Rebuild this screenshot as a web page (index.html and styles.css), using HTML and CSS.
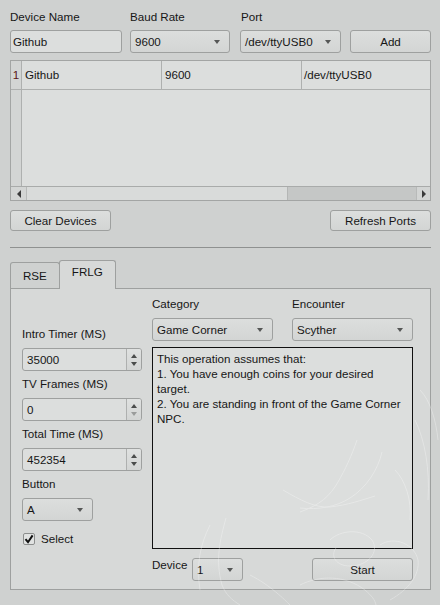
FILE: index.html
```html
<!DOCTYPE html>
<html>
<head>
<meta charset="utf-8">
<link rel="stylesheet" href="styles.css">
</head>
<body>
<div class="window">
  <div class="device-form">
    <div class="field f-name">
      <div class="top-label">Device Name</div>
      <div class="line-edit">Github</div>
    </div>
    <div class="field f-baud">
      <div class="top-label">Baud Rate</div>
      <div class="combo">9600<span class="arrow"></span></div>
    </div>
    <div class="field f-port">
      <div class="top-label">Port</div>
      <div class="combo">/dev/ttyUSB0<span class="arrow"></span></div>
    </div>
    <div class="field f-add">
      <div class="top-label">&nbsp;</div>
      <div class="btn">Add</div>
    </div>
  </div>

  <div class="table">
    <div class="table-body">
      <div class="vheader">
        <div class="vh-cell">1</div>
      </div>
      <div class="cells">
        <div class="row">
          <div class="cell c1">Github</div>
          <div class="cell c2">9600</div>
          <div class="cell c3">/dev/ttyUSB0</div>
        </div>
      </div>
    </div>
    <div class="hscroll">
      <div class="sb-btn sb-left"><span class="tri-left"></span></div>
      <div class="sb-handle"></div>
      <div class="sb-trough"></div>
      <div class="sb-btn sb-right"><span class="tri-right"></span></div>
    </div>
  </div>

  <div class="btn-row">
    <div class="btn wide">Clear Devices</div>
    <div class="btn wide">Refresh Ports</div>
  </div>

  <div class="sep"></div>

  <div class="tabs">
    <div class="tab">RSE</div>
    <div class="tab active">FRLG</div>
  </div>
  <div class="pane">
    <div class="lcol">
      <div class="lbl">Intro Timer (MS)</div>
      <div class="spin">
        <span class="spin-val">35000</span>
        <span class="spin-btns"><span class="tri-up"></span><span class="tri-down"></span></span>
      </div>
      <div class="lbl">TV Frames (MS)</div>
      <div class="spin">
        <span class="spin-val">0</span>
        <span class="spin-btns"><span class="tri-up"></span><span class="tri-down disabled"></span></span>
      </div>
      <div class="lbl">Total Time (MS)</div>
      <div class="spin">
        <span class="spin-val">452354</span>
        <span class="spin-btns"><span class="tri-up"></span><span class="tri-down"></span></span>
      </div>
      <div class="lbl">Button</div>
      <div class="combo small">A<span class="arrow"></span></div>
      <div class="check-row">
        <span class="checkbox"><svg width="10" height="10" viewBox="0 0 10 10"><path d="M1.5 5.2 L4 8.2 L8.6 1.4" fill="none" stroke="#111" stroke-width="2"/></svg></span>
        <span class="check-label">Select</span>
      </div>
    </div>
    <div class="rcol">
      <div class="rtop">
        <div class="rfield">
          <div class="lbl">Category</div>
          <div class="combo">Game Corner<span class="arrow"></span></div>
        </div>
        <div class="rfield">
          <div class="lbl">Encounter</div>
          <div class="combo">Scyther<span class="arrow"></span></div>
        </div>
      </div>
      <div class="info">This operation assumes that:<br>1. You have enough coins for your desired<br>target.<br>2. You are standing in front of the Game Corner<br>NPC.</div>
      <div class="bottom-row">
        <div class="dev-label">Device</div>
        <div class="combo dev">1<span class="arrow"></span></div>
        <div class="btn start">Start</div>
      </div>
    </div>
  </div>

  <svg class="art" width="440" height="605" viewBox="0 0 440 605">
    <g fill="none" stroke="#ffffff" stroke-width="1">
      <path d="M357 440 C352 455 345 470 338 482 C330 496 320 505 300 512"/>
      <path d="M382 452 C378 470 366 488 350 498 C336 507 318 510 300 508"/>
      <path d="M283 490 C300 500 315 508 330 507 C348 505 362 500 375 496"/>
      <path d="M415 420 C425 440 430 470 428 500"/>
      <path d="M420 390 C430 400 436 420 438 440"/>
      <path d="M330 540 C340 530 362 528 372 540 C380 552 368 566 350 566 C336 566 330 556 336 548"/>
      <path d="M380 545 C395 535 415 545 418 560 C420 575 408 590 390 600"/>
      <path d="M210 525 C200 545 196 565 200 590"/>
      <path d="M226 518 C220 540 215 560 222 585 C226 595 232 600 240 605"/>
      <path d="M250 575 C270 585 285 600 290 605"/>
      <path d="M300 585 C320 575 345 575 365 590 C372 596 375 600 376 605"/>
      <path d="M395 470 C405 480 412 500 410 520"/>
    </g>
  </svg>
</div>
</body>
</html>
```

FILE: styles.css
```css
html, body {
  margin: 0;
  padding: 0;
}
body {
  background: #cfd1d0;
  font-family: "Liberation Sans", Arial, sans-serif;
  font-size: 11.6px;
  color: #161616;
}
.window {
  position: relative;
  width: 440px;
  height: 605px;
  box-sizing: border-box;
  padding: 10px 9px 0 10px;
  overflow: hidden;
}

/* top form */
.device-form {
  display: flex;
}
.field {
  display: flex;
  flex-direction: column;
}
.f-name { width: 112px; margin-right: 8px; }
.f-baud { width: 100px; margin-right: 10px; }
.f-port { width: 101px; margin-right: 9px; }
.f-add { width: 81px; }
.top-label {
  line-height: 14px;
  height: 14px;
  margin-bottom: 6px;
}
.f-port .top-label { padding-left: 1px; }

.line-edit {
  height: 23px;
  box-sizing: border-box;
  border: 1px solid #9ea09f;
  border-radius: 3px;
  background: #dcdedd;
  padding-left: 2px;
  line-height: 21px;
}
.combo {
  position: relative;
  height: 23px;
  box-sizing: border-box;
  border: 1px solid #9ea09f;
  border-radius: 3px;
  background: linear-gradient(#dcdedd, #d3d5d4);
  padding-left: 4px;
  line-height: 21px;
}
.arrow {
  position: absolute;
  right: 9px;
  top: 9px;
  width: 0;
  height: 0;
  border-left: 3.5px solid transparent;
  border-right: 3.5px solid transparent;
  border-top: 4px solid #555756;
}
.btn {
  height: 23px;
  box-sizing: border-box;
  border: 1px solid #9ea09f;
  border-radius: 3px;
  background: linear-gradient(#dcdedd, #d3d5d4);
  text-align: center;
  line-height: 21px;
}

/* table */
.table {
  margin-top: 7px;
  height: 141px;
  box-sizing: border-box;
  border: 1px solid #a3a5a4;
  background: #dcdedd;
  display: flex;
  flex-direction: column;
}
.table-body {
  flex: 1;
  display: flex;
}
.vheader {
  width: 10px;
  background: #d3d5d4;
  border-right: 1px solid #aeb0af;
}
.vh-cell {
  height: 28px;
  border-bottom: 1px solid #aeb0af;
  line-height: 28px;
  text-align: center;
  color: #5a1414;
}
.cells {
  flex: 1;
}
.row {
  display: flex;
  height: 28px;
  border-bottom: 1px solid #aeb0af;
}
.cell {
  line-height: 28px;
  padding-left: 3px;
  box-sizing: border-box;
}
.c1, .c2 {
  width: 140px;
  border-right: 1px solid #aeb0af;
}
.c3 {
  flex: 1;
  padding-left: 2px;
}
.hscroll {
  height: 14px;
  box-sizing: border-box;
  border-top: 1px solid #a9abaa;
  display: flex;
  background: #c5c7c6;
}
.sb-btn {
  width: 15px;
  background: #d3d5d4;
  display: flex;
  align-items: center;
  justify-content: center;
}
.sb-left { border-right: 1px solid #b8bab9; }
.sb-right { width: 13px; border-left: 1px solid #b8bab9; }
.sb-handle {
  width: 260px;
  background: #d9dbda;
  border-right: 1px solid #b4b6b5;
}
.sb-trough {
  flex: 1;
}
.tri-left {
  width: 0; height: 0;
  border-top: 4px solid transparent;
  border-bottom: 4px solid transparent;
  border-right: 4px solid #3a3a3a;
}
.tri-right {
  width: 0; height: 0;
  border-top: 4px solid transparent;
  border-bottom: 4px solid transparent;
  border-left: 4px solid #3a3a3a;
}

/* buttons row */
.btn-row {
  margin-top: 9px;
  display: flex;
  justify-content: space-between;
}
.btn.wide {
  width: 101px;
  height: 21px;
  line-height: 19px;
}

.sep {
  margin-top: 16px;
  height: 1px;
  background: #8f9190;
}

/* tabs */
.tabs {
  margin-top: 12px;
  height: 28px;
  display: flex;
  align-items: flex-end;
  position: relative;
  z-index: 2;
}
.tab {
  height: 26px;
  box-sizing: border-box;
  padding: 0 12px;
  border: 1px solid #9ea09f;
  border-bottom: none;
  border-radius: 3px 3px 0 0;
  background: #cfd1d0;
  line-height: 26px;
}
.tab.active {
  height: 29px;
  margin-bottom: -1px;
  background: #d7d9d8;
  line-height: 21px;
  margin-left: -1px;
}

/* pane */
.pane {
  width: 421px;
  height: 302px;
  box-sizing: border-box;
  border: 1px solid #9ea09f;
  background: #d7d9d8;
  padding: 7px 17px 8px 11px;
  display: flex;
  gap: 10px;
}
.lcol {
  width: 121px;
  margin-top: 30px;
  display: flex;
  flex-direction: column;
}
.lbl {
  line-height: 16px;
  height: 16px;
  margin-bottom: 6px;
}
.spin {
  position: relative;
  height: 23px;
  margin-bottom: 5px;
  box-sizing: border-box;
  border: 1px solid #9ea09f;
  border-radius: 3px;
  background: #dcdedd;
  display: flex;
}
.spin-val {
  flex: 1;
  line-height: 21px;
  padding-left: 4px;
  border-right: 1px solid #aeb0af;
}
.spin-btns {
  width: 14px;
  display: flex;
  flex-direction: column;
  align-items: center;
  justify-content: center;
  gap: 4px;
  background: linear-gradient(#dfe1e0, #d3d5d4);
  border-radius: 0 2px 2px 0;
}
.tri-up {
  width: 0; height: 0;
  border-left: 3.5px solid transparent;
  border-right: 3.5px solid transparent;
  border-bottom: 4px solid #4a4c4b;
}
.tri-down {
  width: 0; height: 0;
  border-left: 3.5px solid transparent;
  border-right: 3.5px solid transparent;
  border-top: 4px solid #4a4c4b;
}
.tri-down.disabled {
  border-top-color: #9a9c9b;
}
.combo.small {
  width: 71px;
}
.check-row {
  margin-top: 12px;
  display: flex;
  align-items: center;
  height: 12px;
  padding-left: 1px;
}
.checkbox {
  width: 12px;
  height: 12px;
  box-sizing: border-box;
  border: 1px solid #8c8e8d;
  border-radius: 2px;
  background: #e1e3e2;
  display: flex;
  align-items: center;
  justify-content: center;
}
.check-label {
  margin-left: 6px;
  line-height: 14px;
}

.rcol {
  flex: 1;
  display: flex;
  flex-direction: column;
}
.rtop {
  display: flex;
  gap: 19px;
}
.rfield {
  width: 121px;
}
.info {
  margin-top: 6px;
  height: 202px;
  box-sizing: border-box;
  border: 1px solid #111;
  background: #dcdedd;
  padding: 3px 4px;
  line-height: 15px;
  white-space: nowrap;
}
.bottom-row {
  margin-top: 9px;
  display: flex;
  align-items: flex-start;
}
.dev-label {
  width: 40px;
  line-height: 14px;
}
.combo.dev {
  width: 51px;
  padding-left: 4px;
}
.btn.start {
  width: 101px;
  margin-left: auto;
}

.art {
  position: absolute;
  left: 0;
  top: 0;
  opacity: 0.3;
  pointer-events: none;
  z-index: 5;
}
```
